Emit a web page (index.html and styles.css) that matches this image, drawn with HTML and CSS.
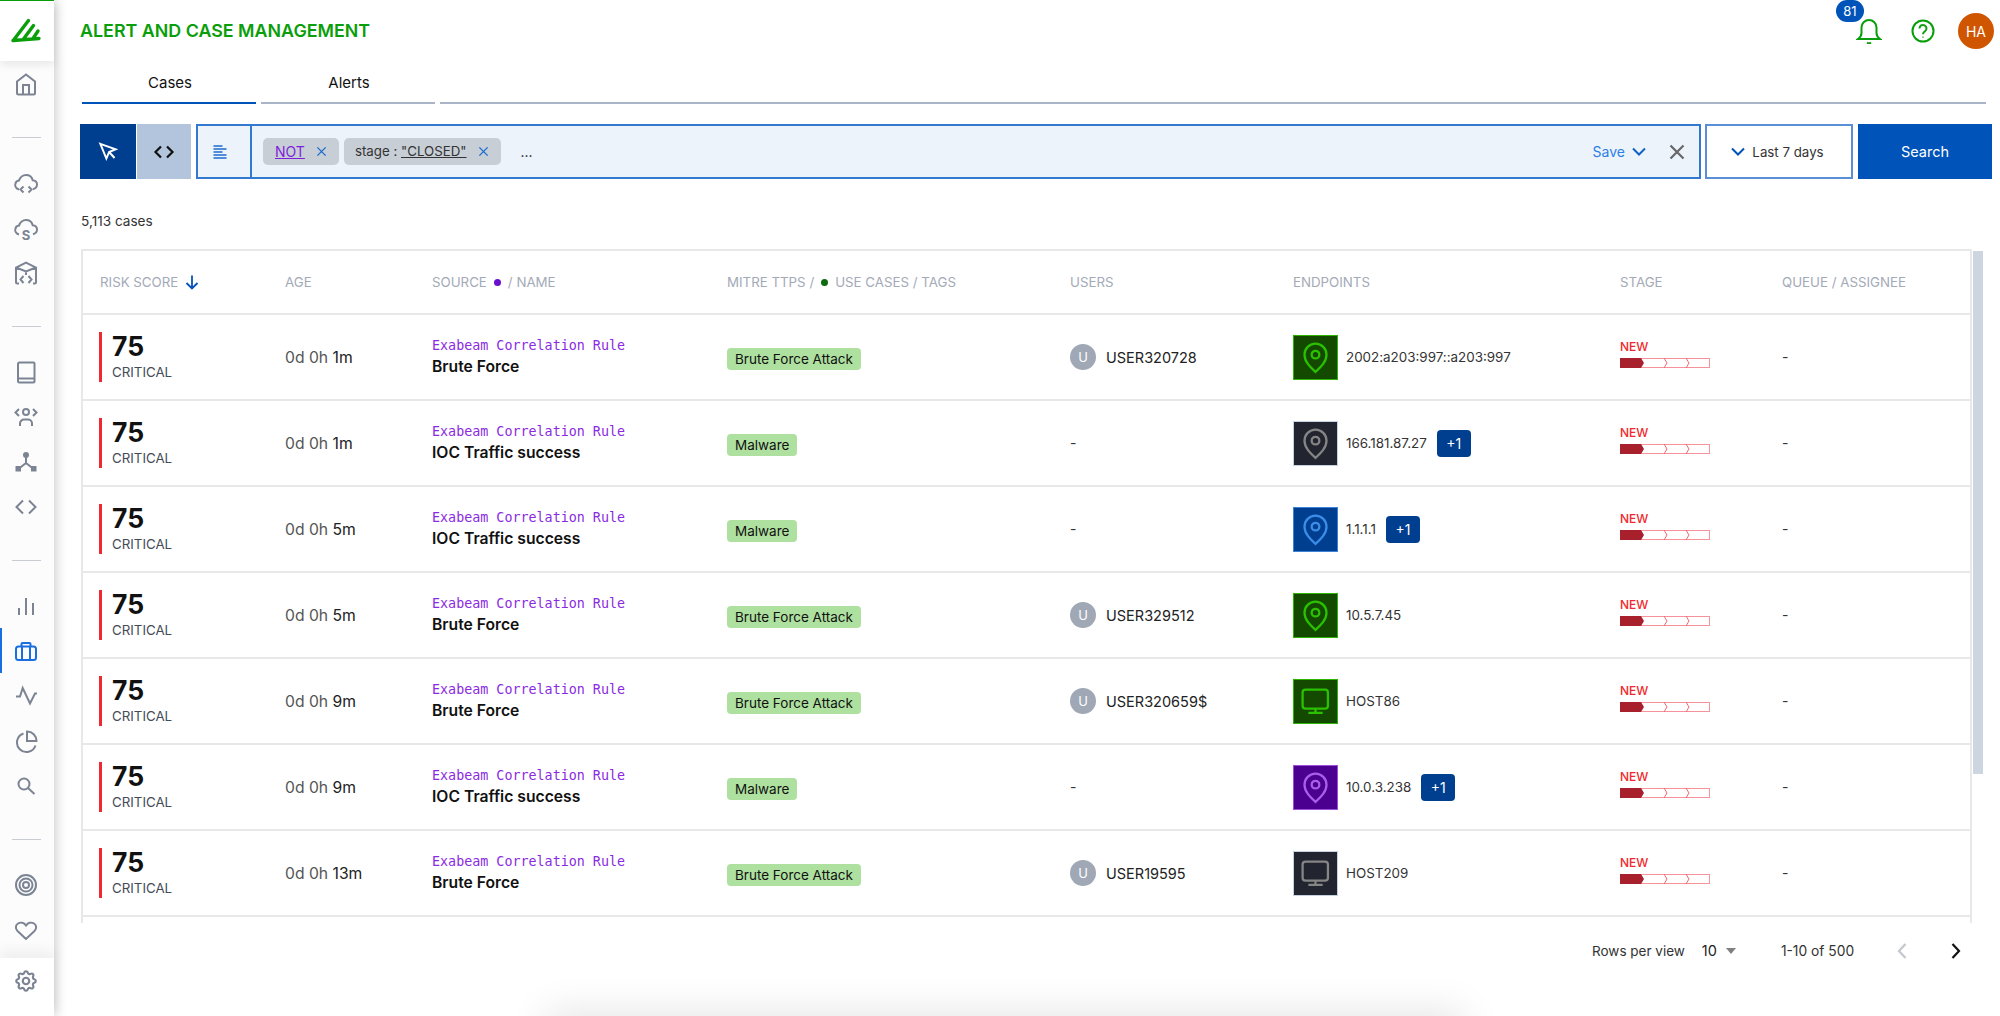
FILE: index.html
```html
<!DOCTYPE html>
<html lang="en">
<head>
<meta charset="utf-8">
<title>Alert and Case Management</title>
<link rel="stylesheet" href="styles.css">
</head>
<body>
<svg class="defs" width="0" height="0" aria-hidden="true">
  <symbol id="pin" viewBox="0 0 45 45"><path d="M22.5 37.5C17 32.500 11 27 11 19.500a11.500 11.500 0 0 1 23 0C34 27 28 32.500 22.500 37.500z"/><circle cx="22.500" cy="19.500" r="4"/></symbol>
  <symbol id="monitor" viewBox="0 0 45 45"><rect x="9" y="10" width="26.500" height="20" rx="3"/><path d="M22.500 30v4.500M15 34.500h15"/></symbol>
  <symbol id="progress" viewBox="0 0 90 10"><rect x=".5" y=".5" width="89" height="9" fill="#fff" stroke="#f5929a"/><polygon points="0,0 21,0 24,5 21,10 0,10" fill="#a8202c"/><path d="M44 0l3 5-3 5M66 0l3 5-3 5" fill="none" stroke="#f0686f"/></symbol>
</svg>
<div class="page">
  <nav class="sidebar">
    <div class="logo">
      <svg width="30" height="30" viewBox="0 0 30 30" fill="none" stroke="#0a9e0a" stroke-width="3.400"><path d="M3 23.500L17.500 4.500M12.500 23L22.500 9.500M22 22.500L27 15M2 24.500L28 22.500" stroke-linecap="round"/></svg>
    </div>
    <div class="nav-group">
      <a class="nav-item"><svg class="ico" viewBox="0 0 26 26"><path d="M4 22V10.500L13 3.500l9 7V22a1.500 1.500 0 0 1-1.500 1.500h-15A1.500 1.500 0 0 1 4 22zM10 23.500V14h6v9.500"/></svg></a>
    </div>
    <div class="nav-rule"></div>
    <div class="nav-group">
      <a class="nav-item"><svg class="ico" viewBox="0 0 26 26"><path d="M6 19.500C3 18.500 1.800 16 2.300 14c.4-2 2-3.200 3.700-3.400C7 7.500 10 5 13 5c3.500 0 6 2.500 6.700 5.200 2.500 0 4.500 2 4.300 4.500-.1 2-1.500 3.800-4 4.500M10.500 16.500L7.500 19.500l3 3M15.500 16.500l3 3-3 3"/></svg></a>
      <a class="nav-item"><svg class="ico" viewBox="0 0 26 26"><path d="M6 19.500C3 18.500 1.800 16 2.300 14c.4-2 2-3.200 3.700-3.400C7 7.500 10 5 13 5c3.500 0 6 2.500 6.700 5.200 2.500 0 4.500 2 4.300 4.500-.1 2-1.500 3.800-4 4.500"/><text class="ico-s" x="13" y="24.500" text-anchor="middle">S</text></svg></a>
      <a class="nav-item"><svg class="ico" viewBox="0 0 26 26"><path d="M6 23.500H4.500a1.500 1.500 0 0 1-1.500-1.500V7.500L13 2.500l10 5V22a1.500 1.500 0 0 1-1.500 1.500H20M3 7.500l10 4 10-4M13 11.500V15M10.500 16L7.500 19.500l3 3.500M15.500 16l3 3.500-3 3.500"/></svg></a>
    </div>
    <div class="nav-rule"></div>
    <div class="nav-group">
      <a class="nav-item"><svg class="ico" viewBox="0 0 26 26"><path d="M6.500 3.500h14a1 1 0 0 1 1 1v18a1 1 0 0 1-1 1h-14a1.500 1.500 0 0 1-1.500-1.500V5a1.500 1.500 0 0 1 1.500-1.500zM5 19.500h16.500"/></svg></a>
      <a class="nav-item"><svg class="ico" viewBox="0 0 26 26"><circle cx="13" cy="8" r="3"/><path d="M7 22v-2.500a4 4 0 0 1 4-4h4a4 4 0 0 1 4 4V22M6 5L2.500 8.500 6 12M20 5l3.500 3.500L20 12"/></svg></a>
      <a class="nav-item"><svg class="ico" viewBox="0 0 26 26"><circle class="solid" cx="13" cy="6" r="3"/><rect class="solid" x="2.500" y="17" width="5.500" height="5.500"/><rect class="solid" x="18" y="17" width="5.500" height="5.500"/><path d="M13 8v6L6 19.500M13 14l7 5.500"/></svg></a>
      <a class="nav-item"><svg class="ico" viewBox="0 0 26 26"><path d="M10 6.500L3.500 13l6.500 6.500M16 6.500l6.500 6.500-6.500 6.500"/></svg></a>
    </div>
    <div class="nav-rule"></div>
    <div class="nav-group">
      <a class="nav-item"><svg class="ico" viewBox="0 0 26 26"><path d="M6 22v-7M13 22V5M20 22V10"/></svg></a>
      <a class="nav-item active"><svg class="ico" viewBox="0 0 26 26"><rect x="3" y="8.500" width="20" height="13.500" rx="2.500"/><path d="M8.500 8.500V6a1 1 0 0 1 1-1h7a1 1 0 0 1 1 1v2.500M9 8.500V22M17 8.500V22"/></svg></a>
      <a class="nav-item"><svg class="ico" viewBox="0 0 26 26"><path d="M3 13.500h4L9.700 5 17 20.500l5-10h2"/></svg></a>
      <a class="nav-item"><svg class="ico" viewBox="0 0 26 26"><path d="M10.500 5.500a9.500 9.500 0 1 0 12 12M14 3.500V13h9.500A9.500 9.500 0 0 0 14 3.500z"/></svg></a>
      <a class="nav-item"><svg class="ico" viewBox="0 0 26 26"><circle cx="11" cy="11" r="5.500"/><path d="M15 15l6.500 6"/></svg></a>
    </div>
    <div class="nav-rule"></div>
    <div class="nav-group">
      <a class="nav-item"><svg class="ico" viewBox="0 0 26 26"><circle cx="13" cy="13" r="10"/><circle cx="13" cy="13" r="6.500"/><circle cx="13" cy="13" r="3"/></svg></a>
      <a class="nav-item"><svg class="ico" viewBox="0 0 26 26"><path d="M13 22L4.500 14C2 11.500 2.500 8 5 6.500c2.500-1.500 6-1 8 2 2-3 5.500-3.500 8-2 2.500 1.500 3 5 .5 7.500z"/></svg></a>
    </div>
    <div class="nav-foot">
      <svg class="ico" viewBox="0 0 24 24"><path d="M10.325 4.317c.426-1.756 2.924-1.756 3.350 0a1.724 1.724 0 002.573 1.066c1.543-.94 3.310.826 2.370 2.370a1.724 1.724 0 001.065 2.572c1.756.426 1.756 2.924 0 3.350a1.724 1.724 0 00-1.066 2.573c.94 1.543-.826 3.310-2.370 2.370a1.724 1.724 0 00-2.572 1.065c-.426 1.756-2.924 1.756-3.350 0a1.724 1.724 0 00-2.573-1.066c-1.543.94-3.310-.826-2.370-2.370a1.724 1.724 0 00-1.065-2.572c-1.756-.426-1.756-2.924 0-3.350a1.724 1.724 0 001.066-2.573c-.94-1.543.826-3.310 2.370-2.370.996.608 2.296.07 2.572-1.065z"/><circle cx="12" cy="12" r="3"/></svg>
    </div>
  </nav>

  <main class="main">
    <header class="topbar">
      <h1 class="title">ALERT AND CASE MANAGEMENT</h1>
      <div class="actions">
        <div class="bell">
          <span class="badge">81</span>
          <svg class="top-ico" viewBox="0 0 26 26"><path d="M2 21c2-1.500 3.500-3.500 3.500-6V9.500a7.500 7.500 0 0 1 15 0V15c0 2.500 1.500 4.500 3.500 6zM11 24.500c1 .7 3 .7 4 0"/></svg>
        </div>
        <svg class="top-ico help" viewBox="0 0 26 26"><circle cx="13" cy="13" r="10.500"/><path d="M9.500 10.500a3.500 3.500 0 1 1 5.500 2.800c-1.200.8-2 1.400-2 3"/><path d="M13 18.800v.8"/></svg>
        <div class="avatar">HA</div>
      </div>
    </header>

    <div class="tabs">
      <div class="tab active">Cases</div>
      <div class="tab">Alerts</div>
      <div class="tab tab-rest"></div>
    </div>

    <div class="querybar">
      <button class="mode mode-on">
        <svg width="24" height="24" viewBox="0 0 22 22" fill="none" stroke="#fff" stroke-width="1.800"><path d="M4 3.500l14 5-6 2.500-2.500 6zM12 11l5 5.500"/></svg>
      </button>
      <button class="mode mode-off">
        <svg width="24" height="24" viewBox="0 0 24 24" fill="none" stroke="#111" stroke-width="2.200"><path d="M9 6.500L3.500 12 9 17.500M15 6.500l5.500 5.500-5.500 5.500"/></svg>
      </button>
      <div class="query">
        <div class="query-icon">
          <svg width="16" height="16" viewBox="0 0 16 16" stroke="#1c6bd0" stroke-width="1.300"><path d="M1.500 2h9M1.500 5h13M1.500 8h9M1.500 11h13M1.500 14h13"/></svg>
        </div>
        <div class="query-body">
          <span class="chip"><a class="chip-link">NOT</a><svg class="chip-x" viewBox="0 0 12 12"><path d="M1.500 1.500l9 9M10.500 1.500l-9 9"/></svg></span>
          <span class="chip">stage : <u class="chip-val">"CLOSED"</u><svg class="chip-x" viewBox="0 0 12 12"><path d="M1.500 1.500l9 9M10.500 1.500l-9 9"/></svg></span>
          <span class="ellipsis">...</span>
          <span class="save">Save</span>
          <svg class="save-chev" viewBox="0 0 14 9"><path d="M1 1.500l6 6 6-6"/></svg>
          <svg class="clear" viewBox="0 0 16 16"><path d="M1.500 1.500l13 13M14.500 1.500l-13 13"/></svg>
        </div>
      </div>
      <button class="date"><svg class="date-chev" viewBox="0 0 14 9"><path d="M1 1.500l6 6 6-6"/></svg>Last 7 days</button>
      <button class="search">Search</button>
    </div>

    <div class="count">5,113 cases</div>

    <div class="table-area">
      <div class="table">
        <div class="row head">
          <div class="th">RISK SCORE<svg class="sort" viewBox="0 0 16 16"><path d="M8 1.500v13M2.500 9L8 14.500 13.500 9"/></svg></div>
          <div class="th">AGE</div>
          <div class="th">SOURCE<i class="dot dot-purple"></i>/ NAME</div>
          <div class="th">MITRE TTPS /<i class="dot dot-green"></i>USE CASES / TAGS</div>
          <div class="th">USERS</div>
          <div class="th">ENDPOINTS</div>
          <div class="th">STAGE</div>
          <div class="th">QUEUE / ASSIGNEE</div>
        </div>

        <div class="row">
          <div class="risk"><div class="risk-num">75</div><div class="risk-lvl">CRITICAL</div></div>
          <div class="age">0d 0h <b>1m</b></div>
          <div class="src"><div class="src-rule">Exabeam Correlation Rule</div><div class="src-name">Brute Force</div></div>
          <div><span class="tag">Brute Force Attack</span></div>
          <div class="user"><span class="user-av">U</span>USER320728</div>
          <div class="ep"><svg class="ep-ico green"><use href="#pin"/></svg>2002:a203:997::a203:997</div>
          <div class="stage"><div class="stage-name">NEW</div><svg class="stage-bar"><use href="#progress"/></svg></div>
          <div class="dash">-</div>
        </div>

        <div class="row">
          <div class="risk"><div class="risk-num">75</div><div class="risk-lvl">CRITICAL</div></div>
          <div class="age">0d 0h <b>1m</b></div>
          <div class="src"><div class="src-rule">Exabeam Correlation Rule</div><div class="src-name">IOC Traffic success</div></div>
          <div><span class="tag">Malware</span></div>
          <div class="dash">-</div>
          <div class="ep"><svg class="ep-ico grey"><use href="#pin"/></svg>166.181.87.27<span class="more">+1</span></div>
          <div class="stage"><div class="stage-name">NEW</div><svg class="stage-bar"><use href="#progress"/></svg></div>
          <div class="dash">-</div>
        </div>

        <div class="row">
          <div class="risk"><div class="risk-num">75</div><div class="risk-lvl">CRITICAL</div></div>
          <div class="age">0d 0h <b>5m</b></div>
          <div class="src"><div class="src-rule">Exabeam Correlation Rule</div><div class="src-name">IOC Traffic success</div></div>
          <div><span class="tag">Malware</span></div>
          <div class="dash">-</div>
          <div class="ep"><svg class="ep-ico blue"><use href="#pin"/></svg>1.1.1.1<span class="more">+1</span></div>
          <div class="stage"><div class="stage-name">NEW</div><svg class="stage-bar"><use href="#progress"/></svg></div>
          <div class="dash">-</div>
        </div>

        <div class="row">
          <div class="risk"><div class="risk-num">75</div><div class="risk-lvl">CRITICAL</div></div>
          <div class="age">0d 0h <b>5m</b></div>
          <div class="src"><div class="src-rule">Exabeam Correlation Rule</div><div class="src-name">Brute Force</div></div>
          <div><span class="tag">Brute Force Attack</span></div>
          <div class="user"><span class="user-av">U</span>USER329512</div>
          <div class="ep"><svg class="ep-ico green"><use href="#pin"/></svg>10.5.7.45</div>
          <div class="stage"><div class="stage-name">NEW</div><svg class="stage-bar"><use href="#progress"/></svg></div>
          <div class="dash">-</div>
        </div>

        <div class="row">
          <div class="risk"><div class="risk-num">75</div><div class="risk-lvl">CRITICAL</div></div>
          <div class="age">0d 0h <b>9m</b></div>
          <div class="src"><div class="src-rule">Exabeam Correlation Rule</div><div class="src-name">Brute Force</div></div>
          <div><span class="tag">Brute Force Attack</span></div>
          <div class="user"><span class="user-av">U</span>USER320659$</div>
          <div class="ep"><svg class="ep-ico green"><use href="#monitor"/></svg>HOST86</div>
          <div class="stage"><div class="stage-name">NEW</div><svg class="stage-bar"><use href="#progress"/></svg></div>
          <div class="dash">-</div>
        </div>

        <div class="row">
          <div class="risk"><div class="risk-num">75</div><div class="risk-lvl">CRITICAL</div></div>
          <div class="age">0d 0h <b>9m</b></div>
          <div class="src"><div class="src-rule">Exabeam Correlation Rule</div><div class="src-name">IOC Traffic success</div></div>
          <div><span class="tag">Malware</span></div>
          <div class="dash">-</div>
          <div class="ep"><svg class="ep-ico purple"><use href="#pin"/></svg>10.0.3.238<span class="more">+1</span></div>
          <div class="stage"><div class="stage-name">NEW</div><svg class="stage-bar"><use href="#progress"/></svg></div>
          <div class="dash">-</div>
        </div>

        <div class="row">
          <div class="risk"><div class="risk-num">75</div><div class="risk-lvl">CRITICAL</div></div>
          <div class="age">0d 0h <b>13m</b></div>
          <div class="src"><div class="src-rule">Exabeam Correlation Rule</div><div class="src-name">Brute Force</div></div>
          <div><span class="tag">Brute Force Attack</span></div>
          <div class="user"><span class="user-av">U</span>USER19595</div>
          <div class="ep"><svg class="ep-ico grey"><use href="#monitor"/></svg>HOST209</div>
          <div class="stage"><div class="stage-name">NEW</div><svg class="stage-bar"><use href="#progress"/></svg></div>
          <div class="dash">-</div>
        </div>
      </div>
      <div class="scroll-thumb"></div>
    </div>

    <footer class="pager">
      <span class="pager-label">Rows per view</span>
      <span class="pager-size">10</span>
      <span class="pager-caret"></span>
      <span class="pager-range">1-10 of 500</span>
      <svg class="pager-arrow off" viewBox="0 0 12 18"><path d="M9.500 2L3 9l6.500 7"/></svg>
      <svg class="pager-arrow" viewBox="0 0 12 18"><path d="M2.500 2L9 9l-6.500 7"/></svg>
    </footer>
  </main>
  <div class="bottom-glow"></div>
</div>
</body>
</html>
```

FILE: styles.css
```css
* { box-sizing: border-box; }
html, body { margin: 0; height: 100%; }
body { font-family: Inter, "Noto Sans", sans-serif; font-size: 14px; color: #222; background: #fff; overflow: hidden; }
.defs { position: absolute; }
button { font: inherit; border: 0; padding: 0; cursor: pointer; }

.page { position: relative; display: flex; height: 1016px; overflow: hidden; }

.sidebar { width: 54px; flex: none; display: flex; flex-direction: column; background: #fcfcfc; box-shadow: 3px 0 10px rgba(0,0,0,.18); z-index: 2; border-top: 1px solid #0a9e0a; }
.logo { height: 60px; flex: none; display: flex; align-items: center; justify-content: center; padding-right: 2px; background: #fff; box-shadow: 0 4px 8px rgba(0,0,0,.08); }
.nav-group { display: flex; flex-direction: column; }
.nav-item { position: relative; height: 45px; display: flex; align-items: center; justify-content: center; padding-right: 2px; }
.nav-rule { height: 1px; margin: 31px 13px 22px 12px; background: #c9cdd3; flex: none; }
.ico { width: 26px; height: 26px; fill: none; stroke: #7c8494; stroke-width: 2; }
.ico .solid { fill: #7c8494; stroke: none; }
.ico-s { font: 700 13px Inter, sans-serif; fill: #7c8494; stroke: none; }
.nav-item.active .ico { stroke: #1a6fe0; }
.nav-item.active::before { content: ""; position: absolute; left: 0; top: 0; bottom: 0; width: 2px; background: #1a6fe0; }
.nav-foot { margin-top: auto; height: 58px; flex: none; display: flex; align-items: center; justify-content: center; padding: 0 2px 12px 0; background: #fff; box-shadow: 0 -8px 12px rgba(0,0,0,.05); }

.main { flex: 1; min-width: 0; display: flex; flex-direction: column; padding: 0 6px 0 26px; }
.topbar { height: 62px; flex: none; display: flex; align-items: center; justify-content: space-between; }
.title { margin: 0 0 2px; font-size: 17.850px; font-weight: 600; color: #0a9e0a; }
.actions { display: flex; align-items: center; }
.bell { position: relative; display: flex; }
.badge { position: absolute; left: -20px; top: -18px; width: 28px; height: 22px; border-radius: 11px; background: #0053b8; color: #fff; font-size: 13px; display: flex; align-items: center; justify-content: center; }
.top-ico { width: 26px; height: 26px; fill: none; stroke: #0a9e0a; stroke-width: 2; display: block; }
.help { margin-left: 28px; }
.avatar { margin-left: 22px; width: 36px; height: 36px; border-radius: 50%; background: #d05500; color: #fff; font-size: 14px; display: flex; align-items: center; justify-content: center; }

.tabs { display: flex; gap: 5px; margin: 0 8px 0 2px; flex: none; }
.tab { width: 174px; height: 42px; padding-left: 2px; display: flex; align-items: center; justify-content: center; font-size: 15px; font-weight: 400; color: #111; border-bottom: 2px solid #a9b5c6; }
.tab.active { border-bottom-color: #0053b8; }
.tab-rest { flex: 1; }

.querybar { display: flex; height: 55px; margin: 20px 2px 0 0; flex: none; }
.mode { display: flex; align-items: center; justify-content: center; }
.mode-on { width: 56px; background: #003f8f; margin-right: 1px; }
.mode-off { width: 54px; background: #b3c5dc; margin-right: 5px; }
.query { flex: 1; min-width: 0; display: flex; background: #ecf3fb; border: 2px solid #3479d0; margin-right: 4px; }
.query-icon { width: 54px; flex: none; border-right: 2px solid #3479d0; padding-right: 8px; display: flex; align-items: center; justify-content: center; }
.query-body { flex: 1; display: flex; align-items: center; padding-left: 11px; }
.chip { display: flex; align-items: center; height: 27px; padding: 0 12px 1px 11px; margin-right: 5px; border-radius: 5px; background: #c8ced6; font-size: 13.300px; white-space: pre; color: #333; }
.chip-link { color: #7d1fd8; text-decoration: underline; font-size: 14px; margin-left: 1px; }
.chip-val { color: #333; }
.chip-x { width: 11px; height: 11px; margin-left: 11px; fill: none; stroke: #1c6bd0; stroke-width: 1.500; }
.ellipsis { margin-left: 15px; font-size: 14px; padding-bottom: 1px; }
.save { margin-left: auto; color: #2d7fe8; font-size: 14px; }
.save-chev { width: 14px; height: 9px; margin-left: 7px; fill: none; stroke: #0f62c4; stroke-width: 2; }
.clear { width: 16px; height: 16px; margin: 0 14px 0 23px; fill: none; stroke: #666; stroke-width: 2.200; }
.date { width: 148px; margin-right: 5px; padding-right: 3px; background: #fff; border: 2px solid #5a8fd6; font-size: 13.300px; color: #333; display: flex; align-items: center; justify-content: center; }
.date-chev { width: 14px; height: 9px; margin-right: 7px; fill: none; stroke: #0053b8; stroke-width: 2; }
.search { width: 134px; background: #0053b8; color: #fff; font-size: 14.500px; }

.count { margin: 33px 0 19px; padding-left: 1px; height: 18px; line-height: 18px; font-size: 13.600px; color: #333; flex: none; }

.table-area { display: flex; height: 674px; margin: 0 11px 0 1px; gap: 1px; flex: none; }
.table { flex: 1; min-width: 0; overflow: hidden; border: 2px solid #e8e8e8; border-bottom: 0; }
.scroll-thumb { width: 10px; height: 523px; margin-top: 2px; background: #ccd5e0; flex: none; }
.row { display: grid; grid-template-columns: 185px 147px 295px 343px 223px 327px 162px 1fr; align-items: center; height: 86px; padding-left: 17px; border-bottom: 2px solid #e8e8e8; }
.row.head { height: 64px; }
.th { display: flex; align-items: center; color: #a3aab7; font-size: 13.300px; white-space: nowrap; }
.sort { width: 16px; height: 16px; margin-left: 6px; fill: none; stroke: #0053b8; stroke-width: 1.800; }
.dot { width: 7px; height: 7px; margin: 0 7px; border-radius: 50%; }
.dot-purple { background: #6a10cc; }
.dot-green { background: #0e6a0e; }

.risk { margin-left: -1px; height: 50px; padding-left: 10px; border-left: 3px solid #ee2a30; }
.risk-num { height: 28px; line-height: 28px; font-size: 26.500px; font-weight: 700; color: #111; }
.risk-lvl { margin-top: 2px; height: 20px; line-height: 21px; font-size: 13.300px; color: #444b57; }
.age { font-size: 15.700px; color: #555; white-space: pre; }
.age b { font-weight: 400; color: #222; }
.src-rule { height: 18px; line-height: 18px; font-family: "DejaVu Sans Mono", monospace; font-size: 13.360px; color: #8a2be2; white-space: nowrap; }
.src-name { height: 22px; line-height: 23px; font-size: 15.700px; font-weight: 600; color: #111; white-space: nowrap; }
.tag { display: inline-block; margin-top: 4px; height: 22px; line-height: 22px; padding: 0 8px; border-radius: 4px; background: #aee0a0; font-size: 13.500px; color: #111; }
.user { display: flex; align-items: center; font-size: 14.500px; color: #222; }
.user-av { width: 26px; height: 26px; margin-right: 10px; border-radius: 50%; background: #a0a7b5; color: #fff; font-size: 13px; display: flex; align-items: center; justify-content: center; }
.dash { font-size: 14px; color: #333; margin-bottom: 2px; }
.ep { display: flex; align-items: center; font-size: 13.400px; color: #333; white-space: nowrap; }
.ep-ico { width: 45px; height: 45px; margin-right: 8px; flex: none; fill: none; stroke-width: 2.400; border: 1px solid; }
.ep-ico.green { background: #144a00; border-color: #2db400; stroke: #2bc000; }
.ep-ico.grey { background: #22252f; border-color: #c7d2e0; stroke: #858585; }
.ep-ico.blue { background: #003f8f; border-color: #3b82d8; stroke: #3a8de8; }
.ep-ico.purple { background: #4b0090; border-color: #9b50d8; stroke: #a860e8; }
.more { margin-left: 10px; width: 34px; height: 27px; border-radius: 4px; background: #003f8f; color: #fff; font-size: 14px; display: flex; align-items: center; justify-content: center; }
.stage { margin-bottom: 6px; }
.stage-name { height: 14px; line-height: 14px; font-size: 12px; font-weight: 500; color: #f0282d; }
.stage-bar { display: block; width: 90px; height: 10px; margin-top: 4px; }

.pager { flex: 1; display: flex; align-items: center; padding-bottom: 38px; padding-left: 1512px; font-size: 13.500px; color: #333; }
.pager-size { margin-left: 17px; font-size: 14.500px; color: #222; }
.pager-caret { margin-left: 9px; width: 0; height: 0; border: 5px solid transparent; border-top: 6px solid #808080; border-bottom: 0; }
.pager-range { margin-left: 45px; font-size: 13.800px; }
.pager-arrow { width: 12px; height: 18px; margin-left: 42px; fill: none; stroke: #111; stroke-width: 2.200; flex: none; }
.pager-arrow.off { stroke: #c3c8d0; }

.bottom-glow { position: absolute; left: 560px; right: 550px; top: 1028px; height: 10px; box-shadow: 0 0 40px 14px rgba(0,0,0,.12); }
```
